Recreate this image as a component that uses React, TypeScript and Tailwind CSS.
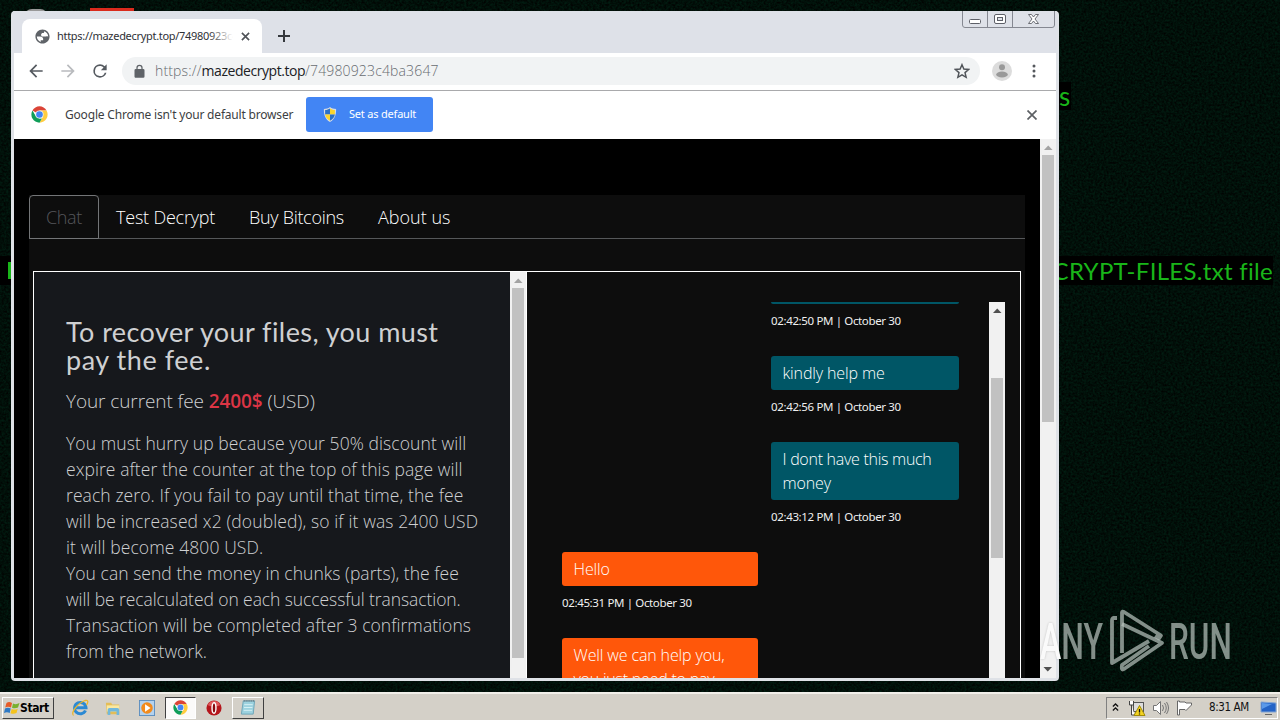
import type { ReactNode } from "react";

function Wallpaper() {
  return (
    <svg className="absolute inset-0 h-full w-full" aria-hidden="true">
      <filter id="grain" x="0" y="0" width="100%" height="100%" colorInterpolationFilters="sRGB">
        <feTurbulence type="fractalNoise" baseFrequency="0.45" numOctaves="2" seed="4" />
        <feColorMatrix values="0 0 0 0 0.002  0 0.16 0 0 -0.018  0 0.1 0 0 -0.014  0 0 0 0 1" />
      </filter>
      <rect width="100%" height="100%" filter="url(#grain)" />
    </svg>
  );
}

function ChromeLogo({ className }: { className: string }) {
  return (
    <svg viewBox="0 0 48 48" className={className}>
      <circle cx="24" cy="24" r="23" fill="#fff" />
      <path d="M24 24 4.100 12.500A23 23 0 0 1 43.900 12.500H24z" fill="#db4437" />
      <path d="M24 12.500h19.900A23 23 0 0 1 24 47l10-17.300z" fill="#ffcd40" />
      <path d="M4.100 12.500 14 29.700 24 35.500h6.700L24 47A23 23 0 0 1 4.100 12.500z" fill="#0f9d58" />
      <circle cx="24" cy="24" r="11.500" fill="#f1f1f1" />
      <circle cx="24" cy="24" r="9.300" fill="#4285f4" />
    </svg>
  );
}

function Arrow({ down = false, dark = false }: { down?: boolean; dark?: boolean }) {
  return (
    <svg viewBox="0 0 16 16" className={`h-4 w-4 shrink-0 ${dark ? "fill-[#505050]" : "fill-[#a3a3a3]"} ${down ? "rotate-180" : ""}`}>
      <path d="M4 11h8.500L8.250 6.500z" />
    </svg>
  );
}

function CaptionButtons() {
  return (
    <svg viewBox="0 0 94 17" className="mr-px h-[17px] w-[94px] shrink-0" fill="none" stroke="#5e6068">
      <path d="M.5 0V14Q.5 16.500 3 16.500H90Q92.500 16.500 92.500 14V0M25.500 0V16M50.500 0V16" stroke="#858891" />
      <rect x="7.500" y="8.500" width="11" height="4" rx="1" fill="#fff" />
      <rect x="32.500" y="3.500" width="11" height="9" rx="1.500" fill="#fff" />
      <rect x="35.500" y="6.500" width="5" height="3" fill="#dfe2e8" />
      <path d="M66.500 3.500h3l2 2.500 2-2.500h3l-3.500 4.500 3.500 4.500h-3l-2-2.500-2 2.500h-3L70 8z" fill="#fff" strokeWidth=".9" />
    </svg>
  );
}

function TabStrip() {
  return (
    <div className="flex h-[42px] shrink-0 items-start bg-[#dee1e8]">
      <div className="mt-2 ml-[9px] flex h-[34px] w-[240px] shrink-0 items-center rounded-t-lg bg-white pl-3">
        <svg viewBox="0 0 24 24" className="h-[17px] w-[17px] shrink-0" fill="#5f6368">
          <path d="M12 2C6.480 2 2 6.480 2 12s4.480 10 10 10 10-4.480 10-10S17.520 2 12 2zM4 12h4.400c3.410.020 4.930 1.730 4.540 5.120H9.500v2.470C6.200 18.500 4 15.400 4 12zm16 .2C19.200 11.400 18 11.300 17 12h-4.500c-1.700 0-2.500-.85-2.500-2.500S11.500 7 12.500 7h1c.8-.2 1-1 .5-2.500 3.600.9 6 4 6 7.700z" />
        </svg>
        <div className="relative ml-1.5 w-[176px] overflow-hidden whitespace-nowrap font-['Noto_Sans'] text-[11px] leading-4 tracking-[-0.300px] text-[#2f3136]">
          https://mazedecrypt.top/74980923c4ba3647
          <span className="absolute inset-y-0 right-0 w-6 bg-gradient-to-r from-white/0 to-white" />
        </div>
        <svg viewBox="0 0 10 10" className="ml-2 h-[9px] w-[9px]" stroke="#505358" strokeWidth="1.800">
          <path d="M1 1l8 8M9 1 1 9" />
        </svg>
      </div>
      <svg viewBox="0 0 12 12" className="mt-[19px] ml-4 h-3 w-3" stroke="#35383d" strokeWidth="2">
        <path d="M6 0v12M0 6h12" />
      </svg>
      <div className="flex-1" />
      <CaptionButtons />
    </div>
  );
}

function Toolbar() {
  return (
    <div className="flex h-[37px] shrink-0 items-center bg-white pb-px">
      <svg viewBox="0 0 24 24" className="ml-3 h-5 w-5" fill="#555a60">
        <path d="M20 11H7.830l5.590-5.590L12 4l-8 8 8 8 1.410-1.410L7.830 13H20z" />
      </svg>
      <svg viewBox="0 0 24 24" className="ml-3 h-5 w-5" fill="#b9bbbe">
        <path d="m12 4-1.410 1.410L16.170 11H4v2h12.170l-5.580 5.590L12 20l8-8z" />
      </svg>
      <svg viewBox="0 0 24 24" className="ml-3 h-5 w-5" fill="#555a60">
        <path d="M17.650 6.350A7.958 7.958 0 0 0 12 4a8 8 0 1 0 7.730 10h-2.080A6 6 0 1 1 12 6c1.660 0 3.140.69 4.220 1.780L13 11h7V4z" />
      </svg>
      <div className="ml-3 flex h-7 w-[858px] items-center rounded-full bg-[#f1f3f4] pl-2.5">
        <svg viewBox="0 0 24 24" className="h-[15px] w-[15px]" fill="#5f6368">
          <path d="M18 8h-1V6A5 5 0 0 0 7 6v2H6a2 2 0 0 0-2 2v10c0 1.100.9 2 2 2h12a2 2 0 0 0 2-2V10a2 2 0 0 0-2-2zM9 8V6a3 3 0 0 1 6 0v2z" />
        </svg>
        <div className="ml-2 whitespace-nowrap font-['Open_Sans'] text-sm font-light tracking-[0.150px] text-[#686c71]">
          https://<span className="font-normal tracking-[-0.450px] text-[#202124]">mazedecrypt.top</span>/74980923c4ba3647
        </div>
        <svg viewBox="0 0 24 24" className="mr-2.5 ml-auto h-4 w-4" fill="none" stroke="#505459" strokeWidth="2.200">
          <path d="m12 2.500 2.800 6.600 7.200.6-5.500 4.700 1.700 7L12 17.700l-6.200 3.700 1.700-7L2 9.700l7.200-.6z" />
        </svg>
      </div>
      <svg viewBox="0 0 20 20" className="ml-3 h-5 w-5">
        <circle cx="10" cy="10" r="10" fill="#dcdcdc" />
        <circle cx="10" cy="6.300" r="3" fill="#999" />
        <ellipse cx="10" cy="13.500" rx="5.800" ry="3" fill="#999" />
      </svg>
      <svg viewBox="0 0 4 14" className="ml-5 h-[14px] w-1" fill="#55585d">
        <circle cx="2" cy="2" r="1.500" /><circle cx="2" cy="7" r="1.500" /><circle cx="2" cy="12" r="1.500" />
      </svg>
    </div>
  );
}

function InfoBar() {
  return (
    <div className="flex h-[49px] shrink-0 items-center border-t border-[#a9aaac] bg-white pb-[2px] font-['Noto_Sans']">
      <ChromeLogo className="ml-[17px] h-[17px] w-[17px]" />
      <span className="mt-px ml-[17px] w-[229px] whitespace-nowrap text-[12px] tracking-[-0.190px] text-[#3c3e42]">
        Google Chrome isn't your default browser
      </span>
      <div className="ml-3 flex h-[35px] w-[127px] items-center rounded-[3px] bg-[#4285f4] pl-[17px] text-white">
        <svg viewBox="0 0 14 16" className="h-[15px] w-[14px]">
          <path d="M7 0C5 1.500 3 2 .5 2 .3 8.500 2 13 7 16c5-3 6.700-7.500 6.500-14C11 2 9 1.500 7 0z" fill="#d7dce2" />
          <path d="M7 1.500C5.500 2.500 4 3 1.800 3.200V8H7z" fill="#2a70c8" />
          <path d="M7 1.500C8.500 2.500 10 3 12.200 3.200V8H7zM1.800 8H7v6.600C4 13 2.300 11 1.800 8z" fill="#fbd52c" />
          <path d="M12.200 8H7v6.600c3-1.600 4.700-3.600 5.200-6.600z" fill="#2a70c8" />
        </svg>
        <span className="ml-[12px] whitespace-nowrap text-[11px] tracking-[-0.200px]">Set as default</span>
      </div>
      <svg viewBox="0 0 10 10" className="mt-px mr-[19px] ml-auto h-2.5 w-2.5" stroke="#5d6064" strokeWidth="1.700">
        <path d="M.5.5l9 9M9.500.5l-9 9" />
      </svg>
    </div>
  );
}

function Bubble({ tone, time, children }: { tone: "teal" | "orange"; time: string; children: ReactNode }) {
  const teal = tone === "teal";
  return (
    <div className={teal ? "ml-[209px] w-[188px]" : "w-[196px]"}>
      <div className={`rounded-[3px] px-[11.500px] py-[5px] text-base leading-6 font-light tracking-[-0.130px] text-white ${teal ? "bg-[#005666]" : "bg-[#ff570a]"}`}>
        {children}
      </div>
      <div className="mt-2 mb-[26px] h-[18px] whitespace-nowrap font-['Noto_Sans'] text-[11.500px] leading-[18px] tracking-[-0.360px] text-[#f0f0f0]">{time}</div>
    </div>
  );
}

function Line({ className = "", children }: { className?: string; children: ReactNode }) {
  return <span className={`block whitespace-nowrap ${className}`}>{children}</span>;
}

function FeePanel() {
  return (
    <div className="h-full w-[476px] shrink-0 overflow-hidden bg-[#16181c] pt-[46px] pl-8 text-[#cfd0d2]">
      <h1 className="font-['Lato'] text-[27px] leading-7">
        <Line className="tracking-[0.420px]">To recover your files, you must</Line>
        <Line className="tracking-[0.550px]">pay the fee.</Line>
      </h1>
      <p className="mt-[13px] whitespace-nowrap text-[19px] leading-[28px] font-light tracking-[-0.090px]">
        Your current fee <b className="font-semibold text-[#dc3545]">2400$</b> (USD)
      </p>
      <p className="mt-[15px] text-[17.500px] leading-[26px] font-light">
        <Line className="tracking-[0.080px]">You must hurry up because your 50% discount will</Line>
        <Line className="tracking-[0.070px]">expire after the counter at the top of this page will</Line>
        <Line className="tracking-[0.090px]">reach zero. If you fail to pay until that time, the fee</Line>
        <Line className="tracking-[0.120px]">will be increased x2 (doubled), so if it was 2400 USD</Line>
        <Line className="tracking-[0.100px]">it will become 4800 USD.</Line>
        <Line className="tracking-[0.040px]">You can send the money in chunks (parts), the fee</Line>
        <Line className="tracking-[-0.080px]">will be recalculated on each successful transaction.</Line>
        <Line className="tracking-[0.050px]">Transaction will be completed after 3 confirmations</Line>
        <Line>from the network.</Line>
      </p>
    </div>
  );
}

function Chat() {
  return (
    <div className="flex min-w-0 flex-1 overflow-hidden bg-[#0d0d0d] pt-[30px] pl-[35px]">
      <div className="w-[427px] shrink-0 overflow-hidden">
        <div className="ml-[209px] h-0.5 w-[188px] rounded-b bg-[#005666]" />
        <div className="mt-2 mb-[26px] ml-[209px] h-[18px] whitespace-nowrap font-['Noto_Sans'] text-[11.500px] leading-[18px] tracking-[-0.360px] text-[#f0f0f0]">02:42:50 PM | October 30</div>
        <Bubble tone="teal" time="02:42:56 PM | October 30">kindly help me</Bubble>
        <Bubble tone="teal" time="02:43:12 PM | October 30"><Line className="tracking-[-0.280px]">I dont have this much</Line>money</Bubble>
        <Bubble tone="orange" time="02:45:31 PM | October 30">Hello</Bubble>
        <Bubble tone="orange" time=""><Line>Well we can help you,</Line><Line className="tracking-[-0.220px]">you just need to pay</Line></Bubble>
      </div>
      <div className="flex w-4 shrink-0 flex-col bg-[#f1f1f1]">
        <Arrow dark />
        <div className="mx-auto mt-[60px] h-[180px] w-3 bg-[#c1c1c1]" />
      </div>
    </div>
  );
}

function Page() {
  return (
    <div className="flex min-h-0 flex-1 overflow-hidden bg-black font-['Open_Sans']">
      <div className="flex w-[1026px] shrink-0 flex-col pt-14 pr-[15px] pl-[15px]">
        <div className="flex min-h-0 flex-1 flex-col bg-[#0d0d0d]">
          <nav className="flex h-11 shrink-0 border-b border-[#555759] text-[18px] leading-[26px] font-light text-white">
            <span className="flex h-11 w-[70px] items-center justify-center rounded-t border border-[#737577] tracking-[-0.300px] text-[#55565b]">Chat</span>
            <span className="ml-[17px] flex w-[100px] items-center whitespace-nowrap tracking-[-0.200px]">Test Decrypt</span>
            <span className="ml-[33px] flex w-[95px] items-center whitespace-nowrap tracking-[-0.300px]">Buy Bitcoins</span>
            <span className="ml-[34px] flex items-center whitespace-nowrap">About us</span>
          </nav>
          <div className="mt-8 mr-1 ml-1 flex min-h-0 flex-1 overflow-hidden border border-b-0 border-white">
            <FeePanel />
            <div className="flex w-[17px] shrink-0 flex-col border-r border-white bg-[#f1f1f1]">
              <Arrow />
              <div className="mx-auto h-[370px] w-3 bg-[#c1c1c1]" />
            </div>
            <Chat />
          </div>
        </div>
      </div>
      <div className="flex w-4 shrink-0 flex-col bg-[#f1f1f1]">
        <Arrow />
        <div className="mx-auto h-[267px] w-3 bg-[#c1c1c1]" />
        <div className="flex-1" />
        <Arrow down dark />
      </div>
    </div>
  );
}

function BrowserWindow() {
  return (
    <div className="absolute top-[11px] left-[11px] flex h-[670px] w-[1048px] flex-col rounded-[4px] bg-[#dfe2e7]">
      <div className="flex h-[667px] flex-col">
        <div className="overflow-hidden rounded-t-[4px] px-0.5">
          <TabStrip />
        </div>
        <div className="flex min-h-0 flex-1 flex-col px-[3px]">
          <Toolbar />
          <InfoBar />
          <Page />
        </div>
      </div>
    </div>
  );
}

function Watermark() {
  return (
    <div className="absolute top-[608px] left-[1040px] flex h-[66px] w-[192px] items-center text-[#bac6c0]/70">
      <span className="mt-0.5 flex w-[62px] shrink-0">
        <span className="origin-left scale-x-[0.640] font-['Roboto'] text-[50px] leading-none font-medium whitespace-nowrap [text-shadow:0_0_3px_#0003]"><span className="text-[#fafafa]">A</span>NY</span>
      </span>
      <svg viewBox="0 0 56 64" className="ml-[7px] h-16 w-14 shrink-0" fill="none" stroke="currentColor" strokeWidth="3.800" strokeLinejoin="round">
        <path d="M13 44V3.500Q13 2 15 3L52 26.500 50 29.500 46 27" />
        <path d="M13 15 53 34 15 60Q12 62 13 56L40 37" />
        <path d="M8 9H4.500Q3 9 3 12V54L13 48M3 54 40 32" />
      </svg>
      <span className="mt-0.5 ml-[4px] flex w-[62px] shrink-0">
        <span className="origin-left scale-x-[0.630] font-['Roboto'] text-[50px] leading-none font-medium whitespace-nowrap">RUN</span>
      </span>
    </div>
  );
}

function Taskbar() {
  return (
    <div className="absolute bottom-0 left-0 flex h-7 w-full items-center border-t-2 border-[#f1efea] bg-[#d4d0c8] pt-px font-['DejaVu_Sans_Condensed']">
      <div className="ml-0.5 flex h-[22px] w-[52px] items-center border border-t-white border-r-[#404040] border-b-[#404040] border-l-white pl-px">
        <svg viewBox="0 0 16 16" className="h-4 w-4 shrink-0">
          <path d="M2.500 3Q5 1 8 3L7 7.500Q4 6 1.200 7.500z" fill="#e65b28" />
          <path d="M9 3.500q3 1.500 6.500-.5L14 7.500q-3 1.500-6 .3z" fill="#78b02f" />
          <path d="M1 8.500q3-1.500 5.700 0l-1 4.500Q3 11.500 0 13z" fill="#2f79c5" />
          <path d="M7.700 9q3 1.300 6-.3L12.500 13q-3 1.500-6 .2z" fill="#f5c31c" />
        </svg>
        <span className="text-[12px] font-bold tracking-[-0.400px]">Start</span>
      </div>
      <svg viewBox="0 0 18 18" className="ml-[17px] h-[18px] w-[18px]" fill="none">
        <path d="M14.500 11.500A5.700 5.700 0 1 1 15 8.800H5" stroke="#2b89d3" strokeWidth="3" />
        <path d="M2.500 16.500C-1 14 7 4 14 1.500c4-1 3 2.500 1.500 4.500" stroke="#e8b52b" strokeWidth="1.300" />
      </svg>
      <svg viewBox="0 0 18 18" className="ml-4 h-4 w-4">
        <path d="M1 3h6l1 2h8v11H2z" fill="#e4bd57" />
        <path d="M2 6h14v7H2z" fill="#fae8a0" />
        <path d="M3 17v-6q0-2 2-2h9q2 0 2 2v6h-3v-4H6v4z" fill="#71b8dc" />
      </svg>
      <svg viewBox="0 0 18 18" className="ml-[18px] h-4 w-4">
        <rect x=".5" y=".5" width="17" height="17" fill="#b4d2ee" stroke="#578bbd" />
        <circle cx="9" cy="9" r="6.500" fill="#f28b1d" />
        <path d="M6.800 4.800v8.400L13 9z" fill="#fff" />
      </svg>
      <div className="ml-[10px] flex h-[22px] w-[31px] items-center justify-center border border-t-[#404040] border-r-white border-b-white border-l-[#404040] bg-[#fbfaf9]">
        <ChromeLogo className="h-[15px] w-[15px]" />
      </div>
      <svg viewBox="0 0 18 18" className="ml-[10px] h-4 w-4">
        <circle cx="9" cy="9" r="8.500" fill="#b5161c" />
        <path d="M2 6a7.500 7.500 0 0 1 14 0q-7 3-14 0z" fill="#e0575a" />
        <ellipse cx="9" cy="9" rx="2.200" ry="5.900" fill="#89090e" stroke="#fff" strokeWidth="1.600" />
      </svg>
      <div className="ml-[10px] flex h-[22px] w-8 items-center justify-center border border-t-white border-r-[#404040] border-b-[#404040] border-l-white">
        <svg viewBox="0 0 16 18" className="h-[17px] w-4">
          <path d="M3 2h12l-1.500 14H1z" fill="#9dd2df" stroke="#6ca5b8" />
          <path d="M4 6h9M3.700 9h9M3.400 12h9" stroke="#d8f1f5" />
          <path d="M3.500 2h11" stroke="#697980" strokeWidth="2" strokeDasharray="1 1" />
        </svg>
      </div>
      <div className="mr-0.5 ml-auto flex h-[22px] w-[172px] items-center border border-t-[#808080] border-r-white border-b-white border-l-[#808080] pl-[5px]">
        <svg viewBox="0 0 8 10" className="mb-0.5 h-2.5 w-[7px]" fill="none" stroke="#111" strokeWidth="1.500">
          <path d="M1 4.500 4 1.500l3 3M1 9l3-3 3 3" />
        </svg>
        <svg viewBox="0 0 18 16" className="ml-[9px] h-4 w-[18px]">
          <rect x="5.500" y="2.500" width="10" height="9" fill="#ddd" stroke="#555" />
          <path d="M1.500 1v4h4V1M3.500 5v10h3" fill="#fff" stroke="#444" />
          <path d="m11.500 5.500 5.500 10H6z" fill="#f4d321" stroke="#a18a08" />
          <path d="M11.500 9v3.500m0 1v1" stroke="#111" strokeWidth="1.300" />
        </svg>
        <svg viewBox="0 0 18 16" className="ml-[6px] h-4 w-[18px]" fill="none" stroke="#747474">
          <path d="M1.500 5.500h3l4-4v13l-4-4h-3z" fill="#fff" />
          <path d="M10.500 5q2 3 0 6M12.500 3q3.500 5 0 10M14.500 2q4 6 0 12" />
        </svg>
        <svg viewBox="0 0 17 16" className="ml-[6px] h-4 w-[17px]" fill="#fff" stroke="#666">
          <path d="M1.500 1v14h2V9.500H9l1 1L15.500 5v-2H10L9 2H3.500V1z" />
        </svg>
        <span className="ml-4 whitespace-nowrap text-[11.500px] tracking-[-0.400px] text-[#111]">8:31 AM</span>
        <svg viewBox="0 0 17 16" className="mr-0 ml-auto h-4 w-[17px] shrink-0">
          <path d="M1 2 16 3v9L1 12z" fill="#2463c6" stroke="#84a6d4" />
          <path d="M2 3l10 1-10 5z" fill="#5b99e9" />
          <path d="M5 14.500h7" stroke="#666" />
        </svg>
      </div>
    </div>
  );
}

export default function App() {
  return (
    <div className="relative h-[720px] w-[1280px] overflow-hidden bg-[#020f0a]">
      <Wallpaper />
      <div className="absolute top-2 left-[90px] h-4 w-[44px] bg-[#d92a1d]" />
      <div className="absolute top-[9px] left-[24px] h-4 w-6 rounded-full bg-[#999]" />
      <div className="absolute top-[82px] left-[1050px] h-7 w-[21px] bg-black pl-[9px] font-['Lato'] text-[26px] leading-7 text-[#19b519]">s</div>
      <div className="absolute top-[256px] left-0 h-[29px] w-4 bg-black pl-2"><div className="mt-[6px] h-[17px] w-[3px] bg-[#19b519]" /></div>
      <div className="absolute top-[256px] left-[1040px] flex h-[29px] w-[233px] justify-end bg-black font-['Lato'] text-[24px] leading-[29px] tracking-[0.300px] whitespace-nowrap text-[#19b519]">
        CRYPT-FILES.txt file
      </div>
      <BrowserWindow />
      <Watermark />
      <Taskbar />
    </div>
  );
}
